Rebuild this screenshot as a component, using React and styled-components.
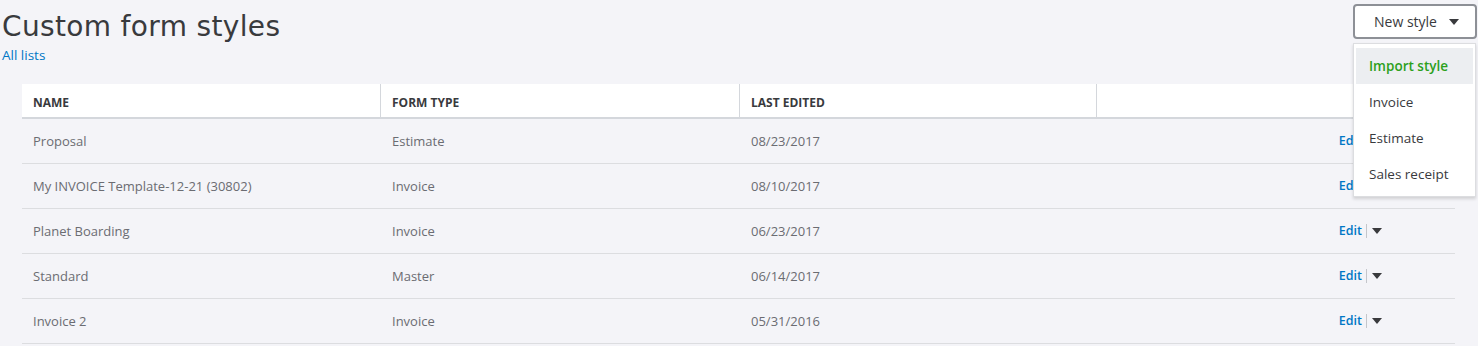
import React from "react";
import styled, { createGlobalStyle } from "styled-components";

const Global = createGlobalStyle`
  html, body { margin: 0; padding: 0; background: #f4f4f8; }
  body { font-family: "Open Sans", "Liberation Sans", sans-serif; }
`;

const Page = styled.div`
  position: relative;
  width: 1478px;
  height: 346px;
  overflow: hidden;
`;

const TopBar = styled.div`
  display: flex;
  justify-content: space-between;
  align-items: flex-start;
  padding: 0 1px 0 2px;
  height: 84px;
  box-sizing: border-box;
`;

const TitleBlock = styled.div`
  display: flex;
  flex-direction: column;
  padding-top: 7px;
`;

const Title = styled.h1`
  margin: 0;
  font-family: "DejaVu Sans", sans-serif;
  font-weight: 400;
  font-size: 28px;
  line-height: 40px;
  color: #393a3d;
  letter-spacing: 0.35px;
`;

const BackLink = styled.a`
  font-size: 13.5px;
  color: #0077c5;
  text-decoration: none;
  line-height: 16px;
`;

const MenuWrap = styled.div`
  position: relative;
  margin-top: 4px;
`;

const NewButton = styled.button`
  width: 124px;
  height: 35px;
  display: flex;
  align-items: center;
  justify-content: center;
  gap: 12px;
  background: #fff;
  border: 2px solid #8d9096;
  border-radius: 4px;
  font-family: "Open Sans", sans-serif;
  font-size: 14px;
  color: #393a3d;
  padding: 0 0 0 3px;
  box-sizing: border-box;
`;

const Caret = styled.span`
  display: inline-block;
  width: 0;
  height: 0;
  border-left: ${(p) => p.$size}px solid transparent;
  border-right: ${(p) => p.$size}px solid transparent;
  border-top: ${(p) => p.$size + 1}px solid #393a3d;
`;

const Menu = styled.ul`
  position: absolute;
  top: 39px;
  left: 0;
  width: 123px;
  margin: 0;
  padding: 4px 2px;
  list-style: none;
  background: #fff;
  border: 1px solid #dcdde0;
  box-shadow: 0 2px 3px rgba(0, 0, 0, 0.15);
  box-sizing: border-box;
  z-index: 2;
`;

const MenuItem = styled.li`
  height: 36px;
  display: flex;
  align-items: center;
  padding-left: 13px;
  font-size: 13.5px;
  color: ${(p) => (p.$active ? "#2ca01c" : "#393a3d")};
  font-weight: ${(p) => (p.$active ? 600 : 400)};
  background: ${(p) => (p.$active ? "#eceef1" : "transparent")};
`;

const Table = styled.div`
  margin-left: 22px;
  width: 1433px;
`;

const HeadRow = styled.div`
  display: grid;
  grid-template-columns: 359px 359px 357px 358px;
  height: 35px;
  background: #fff;
  border-bottom: 2px solid #d4d7dc;
  box-sizing: border-box;
`;

const HeadCell = styled.div`
  display: flex;
  align-items: center;
  padding: 3px 10px 0 11px;
  font-size: 12px;
  font-weight: 700;
  color: #393a3d;
  border-right: ${(p) => (p.$last ? "none" : "1px solid #d4d7dc")};
`;

const Row = styled.div`
  display: grid;
  grid-template-columns: 359px 359px 357px 358px;
  height: 45px;
  border-bottom: 1px solid #dcdde0;
  box-sizing: border-box;
`;

const Cell = styled.div`
  display: flex;
  align-items: center;
  padding: 0 10px 0 11px;
  font-size: 13px;
  color: #6b6c72;
`;

const ActionCell = styled.div`
  display: flex;
  align-items: center;
  justify-content: flex-end;
  padding-right: 73px;
`;

const EditLink = styled.a`
  font-size: 12.5px;
  font-weight: 600;
  color: #0077c5;
  padding-right: 4px;
  border-right: 1px solid #c4c6cb;
  line-height: 14px;
  margin-right: 5px;
  margin-left: -1px;
`;

const rows = [
  ["Proposal", "Estimate", "08/23/2017"],
  ["My INVOICE Template-12-21 (30802)", "Invoice", "08/10/2017"],
  ["Planet Boarding", "Invoice", "06/23/2017"],
  ["Standard", "Master", "06/14/2017"],
  ["Invoice 2", "Invoice", "05/31/2016"],
];

export default function App() {
  return (
    <Page>
      <Global />
      <TopBar>
        <TitleBlock>
          <Title>Custom form styles</Title>
          <BackLink href="#">All lists</BackLink>
        </TitleBlock>
        <MenuWrap>
          <NewButton>
            New style <Caret $size={5} />
          </NewButton>
          <Menu>
            <MenuItem $active>Import style</MenuItem>
            <MenuItem>Invoice</MenuItem>
            <MenuItem>Estimate</MenuItem>
            <MenuItem>Sales receipt</MenuItem>
          </Menu>
        </MenuWrap>
      </TopBar>
      <Table>
        <HeadRow>
          <HeadCell>NAME</HeadCell>
          <HeadCell>FORM TYPE</HeadCell>
          <HeadCell>LAST EDITED</HeadCell>
          <HeadCell $last />
        </HeadRow>
        {rows.map((r) => (
          <Row key={r[0]}>
            <Cell>{r[0]}</Cell>
            <Cell>{r[1]}</Cell>
            <Cell>{r[2]}</Cell>
            <ActionCell>
              <EditLink>Edit</EditLink>
              <Caret $size={5} />
            </ActionCell>
          </Row>
        ))}
      </Table>
    </Page>
  );
}
